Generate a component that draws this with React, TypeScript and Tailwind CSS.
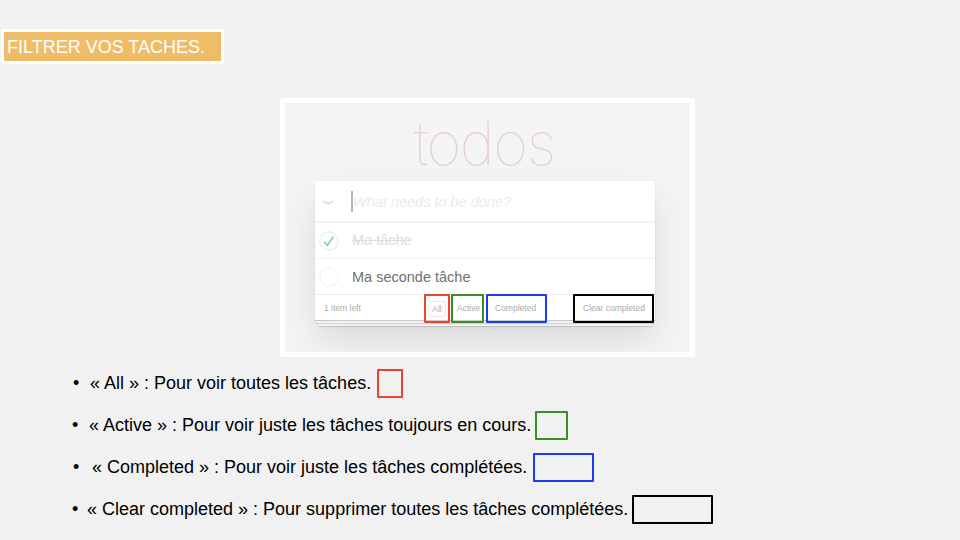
const items = [
  { text: "« All » : Pour voir toutes les tâches.", row: "pl-[73px]", label: "ml-[11px] w-[287px]", box: "w-[26px] border-[#ee4427]" },
  { text: "« Active » : Pour voir juste les tâches toujours en cours.", row: "pl-[72px]", label: "ml-[11px] w-[446px]", box: "w-[33px] border-[#3c8c27]" },
  { text: "« Completed » : Pour voir juste les tâches complétées.", row: "pl-[73px]", label: "ml-[13px] w-[441px]", box: "w-[61px] border-[#1c3bf5]" },
  { text: "« Clear completed » : Pour supprimer toutes les tâches complétées.", row: "pl-[72px]", label: "ml-[9px] w-[545px]", box: "w-[81px] border-black" },
];

function TodoCard() {
  return (
    <div className="relative ml-[30px] w-[340px]">
      <div className="absolute inset-x-[3px] top-2 h-[137px] rounded-b-[1px] bg-[#f5f5f5] shadow-[0_1px_1px_rgba(0,0,0,0.16),0_12px_36px_rgba(0,0,0,0.12)]" />
      <div className="absolute inset-x-[1px] top-2 h-[134px] bg-[#f6f6f6] shadow-[0_1px_1px_rgba(0,0,0,0.14)]" />
      <div className="relative h-[139px] bg-white shadow-[0_1px_1px_rgba(0,0,0,0.18)]">
        <div className="flex h-[42px] items-center border-b-2 border-[#f1f1f1]">
          <svg className="ml-[7px] mt-1 h-3 w-3" viewBox="0 0 12 12" fill="none" stroke="#dedede" strokeWidth="2">
            <path d="M1.2 4 L6.2 6.8 L11.2 4" />
          </svg>
          <div className="ml-[17px] h-[21px] w-[2px] bg-[#b5b5b5]" />
          <div className="mt-[3px] whitespace-nowrap text-[14.5px] italic text-[#ebebeb]">What needs to be done?</div>
        </div>
        <div className="flex h-9 items-center border-b border-[#f3f3f3]">
          <svg className="ml-1 h-5 w-5" viewBox="0 0 20 20" fill="none">
            <circle cx="10" cy="10" r="9.2" stroke="#d8ebe5" />
            <path d="M5 10.8 L8.5 14.4 L14.4 5.6" stroke="#70c5ae" strokeWidth="1.4" />
          </svg>
          <div className="ml-[13px] mt-px whitespace-nowrap text-[14.5px] text-[#dcdcdc] line-through">Ma tâche</div>
        </div>
        <div className="flex h-9 items-center border-b border-[#ececec]">
          <svg className="ml-1 h-5 w-5" viewBox="0 0 20 20" fill="none">
            <circle cx="10" cy="10" r="9.2" stroke="#f0f0f0" />
          </svg>
          <div className="ml-[13px] mt-[3px] whitespace-nowrap text-[14.5px] text-[#707070]">Ma seconde tâche</div>
        </div>
        <div className="-mt-[1px] flex h-[28px] whitespace-nowrap text-[8.5px] leading-[24px] text-[#aaa]">
          <div className="w-[109px] pl-[9px] pt-[2px]">1 item left</div>
          <div className="flex h-[29px] w-[26px] items-center justify-center rounded-[1px] border-2 border-[#ee4427]">
            <span className="flex h-4 w-[18px] items-center justify-center rounded-[2px] border border-[#f0e4e4]">All</span>
          </div>
          <div className="ml-[1px] h-[29px] w-[33px] rounded-[1px] border-2 border-[#3c8c27] pl-[4px]">Active</div>
          <div className="ml-[2px] h-[29px] w-[61px] rounded-[1px] border-2 border-[#1c3bf5] pl-[7px]">Completed</div>
          <div className="ml-[26px] h-[29px] w-[81px] rounded-[1px] border-2 border-black pl-2">Clear completed</div>
        </div>
      </div>
    </div>
  );
}

export default function App() {
  return (
    <main className="h-[540px] w-[960px] overflow-hidden bg-[#f1f1f1] pt-[29px] font-['Liberation_Sans',Arial,sans-serif] text-black">
      <h1 className="ml-[1px] h-[35px] w-[223px] whitespace-nowrap rounded-[2px] border-[3px] border-white bg-[#efbd68] pl-[3px] text-[18px] leading-[30px] text-white">FILTRER VOS TACHES.</h1>
      <section className="ml-[280px] mt-[34px] h-[259px] w-[415px] overflow-hidden rounded-[3px] border-[5px] border-white bg-[#f4f4f4]">
        <div className="h-[78px] whitespace-nowrap pl-[129px] pt-[3px] font-['Inter',sans-serif] text-[60px] font-thin leading-[74px] tracking-[-1.5px] text-[#e6cfcf]">todos</div>
        <TodoCard />
      </section>
      <ul className="mt-[5px]">
        {items.map((item) => (
          <li key={item.text} className={`flex h-[42px] items-center text-[18px] ${item.row}`}>
            <span className="w-[6px]">•</span>
            <span className={`whitespace-nowrap ${item.label}`}>{item.text}</span>
            <span className={`h-[29px] rounded-[1px] border-2 ${item.box}`} />
          </li>
        ))}
      </ul>
    </main>
  );
}
